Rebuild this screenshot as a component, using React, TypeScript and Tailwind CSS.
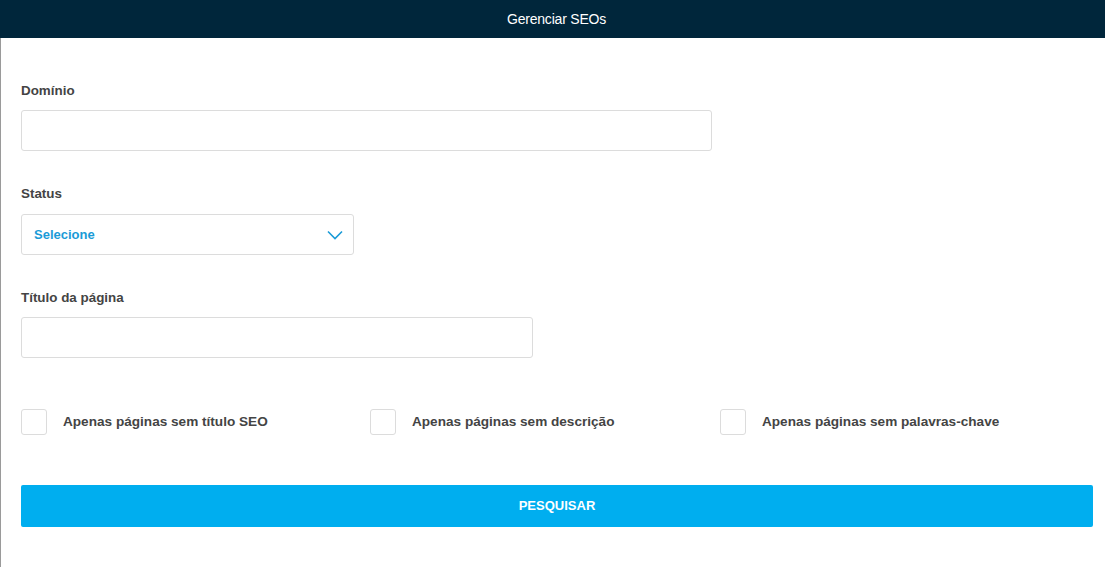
import React from 'react';

const CheckOption: React.FC<{ label: string }> = ({ label }) => (
  <label className="flex items-center gap-4 cursor-pointer">
    <span className="w-[26px] h-[26px] border border-[#dcdcdc] rounded-[3px] bg-white shrink-0" />
    <span className="text-[13.6px] font-bold text-[#444]">{label}</span>
  </label>
);

const App: React.FC = () => {
  return (
    <div className="min-h-[567px] bg-white" style={{ fontFamily: '"Liberation Sans", Arial, sans-serif' }}>
      <header className="h-[38px] bg-[#00263b] flex items-center justify-center pl-2">
        <span className="text-white text-[14px] tracking-[-0.2px]">Gerenciar SEOs</span>
      </header>

      <div className="border-l border-[#9a9a9a] min-h-[529px] pl-5 pr-3 pt-[44px]">
        {/* Domínio */}
        <div>
          <label className="block text-[13.4px] font-bold text-[#444] leading-[18px] mb-[10px]">Domínio</label>
          <input className="w-[691px] h-[41px] border border-[#dcdcdc] rounded-[3px] px-3 text-sm outline-none" />
        </div>

        {/* Status */}
        <div className="mt-[34px]">
          <label className="block text-[13.4px] font-bold text-[#444] leading-[18px] mb-[11px]">Status</label>
          <div className="w-[333px] h-[41px] border border-[#dcdcdc] rounded-[3px] flex items-center justify-between pl-3 pr-[10px]">
            <span className="text-[13px] font-bold text-[#1a9bd7]">Selecione</span>
            <svg width="16" height="10" viewBox="0 0 16 10" fill="none">
              <path d="M1 1.5 L8 8.5 L15 1.5" stroke="#1a9bd7" strokeWidth="1.6" />
            </svg>
          </div>
        </div>

        {/* Título da página */}
        <div className="mt-[34px]">
          <label className="block text-[13.4px] font-bold text-[#444] leading-[18px] mb-[10px]">Título da página</label>
          <input className="w-[512px] h-[41px] border border-[#dcdcdc] rounded-[3px] px-3 text-sm outline-none" />
        </div>

        {/* Filtros */}
        <div className="mt-[51px] grid grid-cols-[349px_350px_1fr]">
          <CheckOption label="Apenas páginas sem título SEO" />
          <CheckOption label="Apenas páginas sem descrição" />
          <CheckOption label="Apenas páginas sem palavras-chave" />
        </div>

        <button className="mt-[50px] w-full h-[42px] bg-[#00aeef] rounded-[2px] text-white text-[13px] font-bold">
          PESQUISAR
        </button>
      </div>
    </div>
  );
};

export default App;
